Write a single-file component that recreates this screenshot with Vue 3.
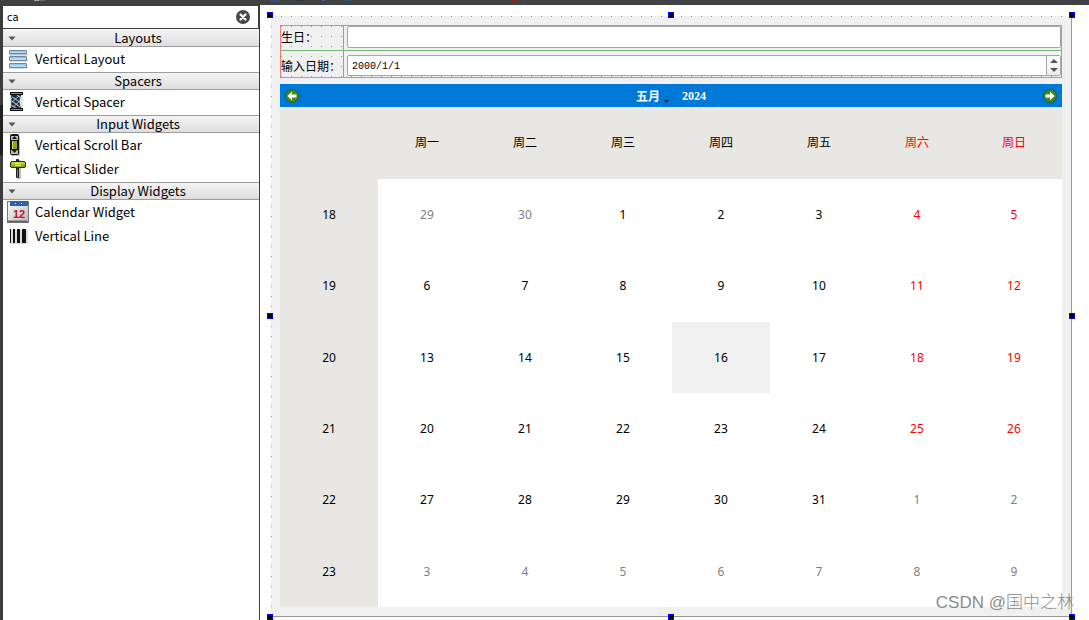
<script setup>
import { ref } from 'vue'

const filter = ref('ca')
const birthday = ref('')
const date = ref('2000/1/1')

const groups = [
  { title: 'Layouts', items: [{ icon: 'layout', name: 'Vertical Layout' }] },
  { title: 'Spacers', items: [{ icon: 'spacer', name: 'Vertical Spacer' }] },
  {
    title: 'Input Widgets',
    items: [
      { icon: 'scroll', name: 'Vertical Scroll Bar' },
      { icon: 'slider', name: 'Vertical Slider' }
    ]
  },
  {
    title: 'Display Widgets',
    items: [
      { icon: 'calendar', name: 'Calendar Widget' },
      { icon: 'line', name: 'Vertical Line' }
    ]
  }
]

const days = ['周一', '周二', '周三', '周四', '周五', '周六', '周日']

const weeks = [18, 19, 20, 21, 22, 23].map((number, row) => ({
  number,
  days: days.map((_, col) => {
    const offset = row * 7 + col - 1
    const outside = offset < 1 || offset > 31
    const day = offset < 1 ? offset + 30 : offset > 31 ? offset - 31 : offset
    return { day, outside, weekend: col > 4 && !outside, today: offset === 16 }
  })
}))

const handles = ['nw', 'n', 'ne', 'w', 'e', 'sw', 's', 'se']
</script>

<template>
  <div class="window">
    <header class="topbar">
      <svg width="600" height="2" aria-hidden="true">
        <rect x="34" y="0" width="5" height="1" fill="#aaa" />
        <rect x="39" y="0" width="6" height="1" fill="#6c6e66" />
        <rect x="270" y="0" width="10" height="2" fill="#34507c" />
        <rect x="296" y="0" width="7" height="1" fill="#2c343c" />
        <rect x="322" y="0" width="3" height="1" fill="#4663a0" />
        <rect x="345" y="0" width="7" height="1" fill="#34507c" />
        <rect x="512" y="0" width="5" height="1" fill="#8a2020" />
      </svg>
    </header>
    <div class="body">
      <div class="edge"></div>
      <aside class="sidebar">
        <div class="search">
          <input v-model="filter" type="text" aria-label="Filter" />
          <button type="button" aria-label="Clear" @click="filter = ''">
            <svg width="14" height="14" viewBox="0 0 14 14">
              <circle cx="7" cy="7" r="7" fill="#484848" />
              <path d="M4.5 4.5l5 5M9.5 4.5l-5 5" stroke="#fff" stroke-width="2.2" stroke-linecap="round" />
            </svg>
          </button>
        </div>
        <section v-for="group in groups" :key="group.title" class="group">
          <h2>
            <svg class="fold" width="8" height="5" viewBox="0 0 8 5" aria-hidden="true">
              <path d="M0.5 0.5h7L4 4.5z" fill="#555" />
            </svg>
            <span>{{ group.title }}</span>
          </h2>
          <ul>
            <li v-for="item in group.items" :key="item.name">
              <svg class="icon" width="24" height="24" viewBox="0 0 24 24" aria-hidden="true">
                <defs>
                  <linearGradient id="blueBar" x1="0" y1="0" x2="0" y2="1">
                    <stop offset="0" stop-color="#7fbce9" />
                    <stop offset="1" stop-color="#d3ebfb" />
                  </linearGradient>
                  <linearGradient id="greenBar" x1="0" y1="0" x2="0" y2="1">
                    <stop offset="0" stop-color="#c9e24a" />
                    <stop offset="1" stop-color="#6f9a00" />
                  </linearGradient>
                  <linearGradient id="page" x1="0" y1="0" x2="1" y2="1">
                    <stop offset="0" stop-color="#ffffff" />
                    <stop offset="1" stop-color="#b8b8b8" />
                  </linearGradient>
                </defs>
                <g v-if="item.icon === 'layout'" fill="url(#blueBar)" stroke="#71839c">
                  <path d="M4 7.5h18.500M4 13.500h18.500M4 20.500h18.500" stroke="#b9bec6" stroke-width="2" />
                  <rect x="4.500" y="3.500" width="17" height="3" rx="0.5" />
                  <rect x="4.500" y="9.500" width="17" height="4" rx="0.5" />
                  <rect x="4.500" y="16.500" width="17" height="4" rx="0.5" />
                </g>
                <g v-else-if="item.icon === 'spacer'">
                  <rect x="5" y="4" width="13" height="16" fill="#e2e2e2" />
                  <path d="M6 5c1 5 0 8 0 13h10c-2-5-2-8 0-13z" fill="#1c2a33" />
                  <path d="M7 7l8 5M7 11l8 6M6 15l5 3M12 5l4 3" stroke="#8fb6cc" stroke-width="1.2" />
                  <path d="M14 6l-7 6M15 11l-7 6" stroke="#dce9f0" stroke-width="0.7" />
                  <rect x="5.500" y="2.500" width="12" height="2" fill="#8c8c8c" stroke="#111" />
                  <rect x="5.500" y="18.500" width="12" height="2" fill="#8c8c8c" stroke="#111" />
                </g>
                <g v-else-if="item.icon === 'scroll'">
                  <rect x="6" y="3" width="9" height="20" rx="1" fill="#bbb" />
                  <rect x="5" y="1" width="9" height="21" rx="2" fill="#111" />
                  <rect x="6" y="3" width="7" height="4" fill="#bbb" />
                  <rect x="6" y="17" width="7" height="4" fill="#bbb" />
                  <path d="M7 6l2.500-3L12 6zM7 17l2.500 3 2.500-3z" fill="#111" />
                  <rect x="7" y="8" width="5" height="8" fill="#8aac08" />
                  <path d="M7.500 8v8" stroke="#cde36a" />
                </g>
                <g v-else-if="item.icon === 'slider'">
                  <rect x="12" y="3" width="4" height="19" rx="1" fill="#bbb" />
                  <rect x="11" y="2" width="3" height="19" rx="1" fill="#222" />
                  <path d="M12.500 12v8" stroke="#778" />
                  <rect x="5.500" y="4.500" width="15" height="6" rx="1.500" fill="url(#greenBar)" stroke="#263300" />
                  <path d="M10 6.500h6M10 8.500h6" stroke="#fafae0" />
                </g>
                <g v-else-if="item.icon === 'calendar'">
                  <rect x="2.500" y="1.500" width="21" height="21" fill="url(#page)" stroke="#777" />
                  <rect x="5" y="1" width="18" height="5" fill="#2d65ad" />
                  <path d="M10 3.500h1M16 3.500h1" stroke="#fff" />
                  <path d="M2.500 21.500h20" stroke="#666" stroke-width="2" />
                  <text x="14" y="18" text-anchor="middle" class="icon-date">12</text>
                </g>
                <g v-else>
                  <rect x="5" y="6" width="18" height="14" fill="#ddd" />
                  <path d="M5.500 5v14" stroke="#111" />
                  <path d="M9 5v14" stroke="#111" stroke-width="2" />
                  <path d="M13.500 5v14" stroke="#111" stroke-width="3" />
                  <path d="M19 5v14" stroke="#111" stroke-width="4" />
                </g>
              </svg>
              <span>{{ item.name }}</span>
            </li>
          </ul>
        </section>
      </aside>

      <main class="canvas">
        <div class="form">
          <div class="fields">
            <label for="birthday">生日：</label>
            <div class="cell">
              <input id="birthday" v-model="birthday" class="box" type="text" />
            </div>
            <label for="date">输入日期：</label>
            <div class="cell second">
              <div class="box spin">
                <input id="date" v-model="date" type="text" />
                <div class="steps">
                  <button type="button" aria-label="Up">
                    <svg width="8" height="4" viewBox="0 0 8 4"><path d="M0 4l4-4 4 4z" fill="#555" /></svg>
                  </button>
                  <button type="button" aria-label="Down">
                    <svg width="8" height="4" viewBox="0 0 8 4"><path d="M0 0l4 4 4-4z" fill="#555" /></svg>
                  </button>
                </div>
              </div>
            </div>
          </div>

          <div class="calendar">
            <nav>
              <button type="button" aria-label="Previous month">
                <svg width="14" height="14" viewBox="0 0 14 14">
                  <circle cx="7" cy="7" r="6.500" fill="#3f8d24" stroke="#1f5c2c" />
                  <path d="M2.500 7L7 2.800v2.700h4.500v3H7v2.700z" fill="#fff" />
                </svg>
              </button>
              <div class="title">
                <button type="button" class="month">
                  五月
                  <svg width="5" height="3" viewBox="0 0 5 3"><path d="M0 0h5L2.500 3z" fill="#062c52" /></svg>
                </button>
                <button type="button" class="year">2024</button>
              </div>
              <button type="button" aria-label="Next month">
                <svg width="14" height="14" viewBox="0 0 14 14">
                  <circle cx="7" cy="7" r="6.500" fill="#3f8d24" stroke="#1f5c2c" />
                  <path d="M11.500 7L7 2.800v2.700H2.500v3H7v2.700z" fill="#fff" />
                </svg>
              </button>
            </nav>
            <table>
              <thead>
                <tr>
                  <td></td>
                  <th v-for="(day, i) in days" :key="day" scope="col" :class="{ weekend: i > 4 }">{{ day }}</th>
                </tr>
              </thead>
              <tbody>
                <tr v-for="week in weeks" :key="week.number">
                  <th scope="row">{{ week.number }}</th>
                  <td
                    v-for="(d, i) in week.days"
                    :key="i"
                    :class="{ outside: d.outside, weekend: d.weekend, today: d.today }"
                  >{{ d.day }}</td>
                </tr>
              </tbody>
            </table>
          </div>
          <i v-for="h in handles" :key="h" class="handle" :class="h"></i>
        </div>
        <div class="watermark">CSDN @国中之林</div>
      </main>
    </div>
  </div>
</template>

<style>
body {
  background: #fff;
}
</style>

<style scoped>
.window {
  display: flex;
  flex-direction: column;
  min-height: 100vh;
  color: #000;
  font-family: "Noto Sans", "Noto Sans CJK SC", sans-serif;
  font-size: 12px;
}
button,
input {
  margin: 0;
  padding: 0;
  border: 0;
  background: none;
  color: inherit;
  font: inherit;
  outline: 0;
}
svg {
  display: block;
}
.topbar {
  height: 5px;
  overflow: hidden;
  background: #3f4143;
}
.body {
  display: flex;
  flex: 1;
}
.edge {
  width: 3px;
  background: linear-gradient(#3c3c3c 100px, #202020 100px, #202020 150px, #3c3c3c 150px);
}
.sidebar {
  box-sizing: border-box;
  width: 257px;
  border-top: 1px solid #3f3a40;
  border-right: 1px solid #3c3c3c;
  background: #fff;
  font-family: "Noto Sans CJK SC", sans-serif;
  font-size: 13px;
}
.search {
  display: flex;
  align-items: center;
  height: 22px;
  padding: 0 8px 0 4px;
  border-right: 1px solid #3c3c3c;
  border-bottom: 1px solid #3c3c3c;
}
.search input {
  flex: 1;
  min-width: 0;
  font-family: "DejaVu Sans", sans-serif;
  font-size: 10px;
}
.group h2 {
  position: relative;
  box-sizing: border-box;
  height: 18px;
  margin: 0;
  padding-left: 14px;
  border-top: 1px solid #9c9c9c;
  border-bottom: 1px solid #9c9c9c;
  background: linear-gradient(#f4f4f4, #dedede);
  font-size: 13px;
  font-weight: 400;
  line-height: 16px;
  text-align: center;
}
.group:nth-of-type(1) h2 {
  border-top-color: #f4f4f4;
}
.fold {
  position: absolute;
  left: 5px;
  top: 6px;
}
.group ul {
  margin: 0;
  padding: 0 0 1px;
  list-style: none;
}
.group li {
  display: flex;
  align-items: center;
  gap: 6px;
  height: 24px;
  padding-left: 2px;
  line-height: 24px;
}
.icon-date {
  fill: #b8141c;
  font: bold 11px "Liberation Sans", sans-serif;
}
.canvas {
  position: relative;
  display: flex;
  flex: 1;
  padding: 11px 17px 3px 11px;
}
.form {
  position: relative;
  display: flex;
  flex: 1;
  flex-direction: column;
  gap: 6px;
  padding: 9px;
  border-right: 1px solid #9a9a9a;
  border-bottom: 1px solid #9a9a9a;
  background: conic-gradient(at 1px 1px, transparent 75%, #9a9a9a 0) 0 0 / 10px 10px #f0f0f0;
}
.fields {
  display: grid;
  grid-template-columns: 63px 1fr;
  grid-template-rows: 25px 26px;
  border: 1px solid #f47c7c;
}
.fields label {
  border-right: 1px solid #74b874;
  font-family: "Noto Sans CJK SC", sans-serif;
  line-height: 22px;
  white-space: nowrap;
}
.fields label:first-child,
.cell:nth-child(2) {
  border-bottom: 1px solid #74b874;
}
.fields label:nth-child(3) {
  line-height: 29px;
}
.cell {
  display: flex;
  align-items: flex-start;
  padding-left: 3px;
}
.second {
  padding-top: 4px;
}
.box {
  box-sizing: border-box;
  flex: 1;
  height: 22px;
  border: 1px solid #a6a6a6;
  border-radius: 2px;
  background: #fff;
}
.spin {
  display: flex;
  height: 21px;
}
.spin input {
  flex: 1;
  min-width: 0;
  padding: 2px 0 0 4px;
  font-family: "Liberation Mono", monospace;
  font-size: 10px;
}
.steps {
  display: flex;
  flex-direction: column;
  width: 13px;
  border-left: 1px solid #a6a6a6;
  background: linear-gradient(#fff, #ececec);
}
.steps button {
  display: flex;
  flex: 1;
  align-items: center;
  justify-content: center;
}
.calendar {
  display: flex;
  flex: 1;
  flex-direction: column;
}
nav {
  display: flex;
  align-items: center;
  justify-content: space-between;
  height: 23px;
  padding: 0 5px;
  background: #0078d7;
  color: #fff;
  font-weight: 700;
}
.title {
  display: flex;
  align-items: center;
  gap: 13px;
  padding-top: 2px;
}
.month {
  display: flex;
  align-items: flex-end;
  gap: 4px;
  line-height: 17px;
}
.month svg {
  margin-bottom: 2px;
}
.year {
  font-family: "Liberation Serif", serif;
}
table {
  flex: 1;
  width: 100%;
  border-collapse: collapse;
  table-layout: fixed;
  background: #fff;
}
thead,
tbody th {
  background: #e8e7e3;
}
tr {
  height: 71px;
}
thead tr {
  height: 72px;
}
th,
td {
  padding: 0;
  font-weight: 400;
  text-align: center;
}
thead th {
  padding-bottom: 2px;
}
thead th:not(:last-child),
thead td {
  width: 98px;
  width: 12.53%;
}
.outside {
  color: #808080;
}
.weekend {
  color: #f00;
}
.today {
  background: #f0f0f0;
}
.handle {
  position: absolute;
  box-sizing: border-box;
  width: 6px;
  height: 6px;
  border: 1px solid #00f;
  background: #000;
}
.nw,
.n,
.ne {
  top: -4px;
}
.sw,
.s,
.se {
  bottom: -4px;
}
.nw,
.w,
.sw {
  left: -4px;
}
.ne,
.e,
.se {
  right: -4px;
}
.n,
.s {
  left: calc(50% - 3px);
}
.w,
.e {
  top: calc(50% - 3px);
}
.watermark {
  position: absolute;
  right: 15px;
  bottom: 4px;
  color: #8a8a8a;
  font-family: "Liberation Sans", "Noto Sans CJK SC", sans-serif;
  font-size: 17px;
  font-weight: 300;
  line-height: 26px;
}
</style>
